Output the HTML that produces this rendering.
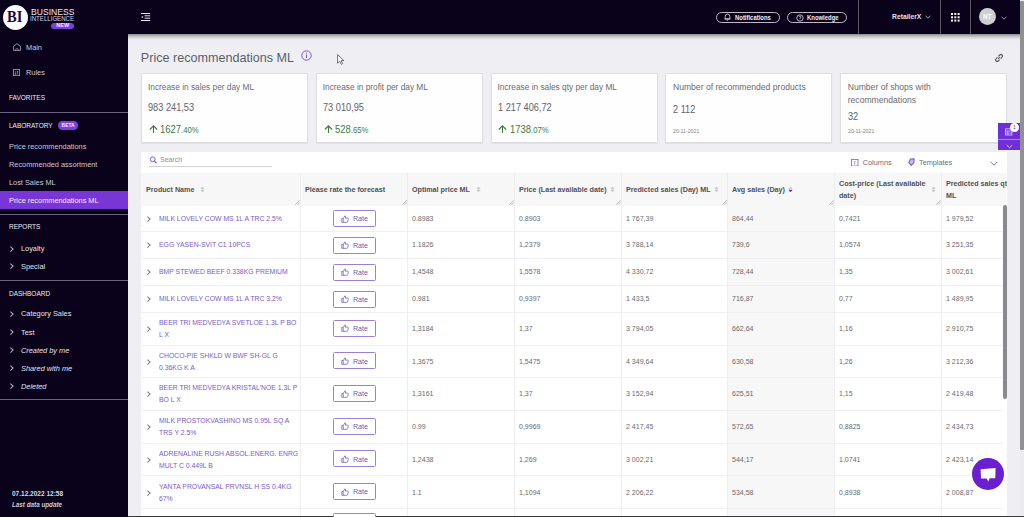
<!DOCTYPE html><html><head><meta charset="utf-8"><style>
*{margin:0;padding:0;box-sizing:border-box}
html,body{width:1024px;height:517px;overflow:hidden;background:#efeff3;font-family:"Liberation Sans",sans-serif}
body{position:relative}
.a{position:absolute;white-space:nowrap}
.dk{position:absolute;background:#09021a}
.sb{position:absolute;white-space:nowrap;color:#cdc9d4;font-size:8px;line-height:10px;transform:scaleX(0.92);transform-origin:0 0}
.sh{position:absolute;white-space:nowrap;color:#f0ecf6;font-size:7.3px;line-height:10px;transform:scaleX(0.89);transform-origin:0 0}
.sdiv{position:absolute;left:0;width:128px;height:1.3px;background:#67627e}
.chev{position:absolute;width:3.6px;height:3.6px;border-right:1px solid #b8b4c2;border-top:1px solid #b8b4c2;transform:rotate(45deg)}
.chevd{position:absolute;width:3.6px;height:3.6px;border-right:0.9px solid #7c7c80;border-top:0.9px solid #7c7c80;transform:rotate(45deg)}
.card{position:absolute;top:73px;width:167px;height:70px;background:#fefefe;border:1px solid #dcdce1;border-radius:1.5px;box-shadow:0 0.6px 0.8px rgba(0,0,0,0.07)}
.ct{position:absolute;left:6px;top:7px;font-size:8.3px;color:#6b6b70;line-height:13px;white-space:nowrap}
.cv{position:absolute;left:6px;font-size:10.4px;color:#636368;line-height:12px;white-space:nowrap;transform:scaleX(0.885);transform-origin:0 0}
.cd{position:absolute;left:6px;top:53.7px;font-size:6px;color:#86868a;line-height:6px;transform:scaleX(0.87);transform-origin:0 0}
.cg{position:absolute;left:18.3px;top:49px;font-size:10.5px;color:#3f7b3f;line-height:12px;white-space:nowrap;transform:scaleX(0.9);transform-origin:0 0}
.cg small{font-size:8.6px}
.arr{position:absolute;left:6.8px;top:50.5px}
.th{position:absolute;top:172px;height:34px;background:#f7f7f7;border-top:1px solid #fcfcfc}
.tht{position:absolute;left:4px;font-size:7.6px;font-weight:bold;color:#505055;line-height:11px;white-space:nowrap;transform:scaleX(0.94);transform-origin:0 0}
.vl{position:absolute;width:1px;background:#eeeef0}
.hl{position:absolute;left:141px;width:862px;height:1px;background:#f0f0f2}
.pn{position:absolute;left:159px;font-size:7.7px;color:#7a5cc4;line-height:12px;white-space:nowrap;transform:scaleX(0.89);transform-origin:0 0}
.num{position:absolute;font-size:7.8px;color:#6a6a6e;line-height:10px;white-space:nowrap;transform:scaleX(0.9);transform-origin:0 0}
.rate{position:absolute;left:333px;width:43px;height:17px;border:1px solid #9a7fdc;border-radius:1.5px;background:#fff}
.rate span{position:absolute;left:19px;top:3.3px;font-size:7.8px;line-height:10px;color:#6c5cb0;transform:scaleX(0.91);transform-origin:0 0}
.rz{position:absolute;width:5px;height:5px}
</style></head><body>
<div class="dk" style="left:0;top:0;width:128px;height:517px"></div>
<div class="dk" style="left:128px;top:0;width:892px;height:34px"></div>
<div class="a" style="left:128px;top:34px;width:892px;height:7px;background:linear-gradient(#8e8e92 0%,#b4b4b8 25%,#d2d2d8 50%,#e8e8ee 75%,#efeff3 100%)"></div>
<div class="a" style="left:1020px;top:0;width:4px;height:517px;background:#ececee"></div>
<div class="a" style="left:1020px;top:1.2px;width:4px;height:448.5px;background:#909092;border-radius:1px"></div>
<div class="a" style="left:128px;top:516px;width:896px;height:1px;background:#3a3a3e"></div>
<div class="a" style="left:2.6px;top:4.8px;width:25px;height:25.2px;border-radius:50%;background:#fbfafd"></div>
<div class="a" style="left:7.3px;top:7.85px;font-family:'Liberation Serif',serif;font-weight:bold;font-size:17.5px;line-height:17.5px;color:#1a0a36;transform:scaleX(0.83);transform-origin:0 0">BI</div>
<div class="a" style="left:30.5px;top:7.8px;font-size:9.8px;line-height:8px;color:#ebe6f4;transform:scaleX(0.876);transform-origin:0 0">BUSINESS</div>
<div class="a" style="left:30.2px;top:16px;font-size:7.1px;line-height:6px;color:#d8d3e0;transform:scaleX(0.86);transform-origin:0 0">INTELLIGENCE</div>
<div class="a" style="left:51.2px;top:22.7px;width:23px;height:6.2px;border-radius:3.1px;background:#7a3fde"></div>
<div class="a" style="left:56.3px;top:22.33px;font-size:5.5px;line-height:7px;color:#f2ecff;font-weight:bold">NEW</div>
<svg class="a" style="left:12.6px;top:43px" width="8" height="8" viewBox="0 0 8 8"><path d="M0.6 3.4L4 0.6L7.4 3.4V7.4H0.6Z" fill="none" stroke="#aaa5b8" stroke-width="0.85" stroke-linejoin="round"/><path d="M2.4 7.3C2.4 5.2 5.6 5.2 5.6 7.3" fill="none" stroke="#aaa5b8" stroke-width="0.8"/></svg>
<div class="sb" style="left:25.5px;top:42.5px">Main</div>
<svg class="a" style="left:13px;top:69px" width="7.2" height="7.2" viewBox="0 0 7.2 7.2"><rect x="0.5" y="0.6" width="6.2" height="6.1" fill="none" stroke="#aaa5b8" stroke-width="0.85"/><path d="M2.6 2.2V5.6M4.6 2.2V5.6M1.9 4.6L2.6 5.6L3.3 4.6M3.9 3.2L4.6 2.2L5.3 3.2" fill="none" stroke="#aaa5b8" stroke-width="0.6"/></svg>
<div class="sb" style="left:25.5px;top:68.3px">Rules</div>
<div class="sh" style="left:8.7px;top:92.7px">FAVORITES</div>
<div class="sdiv" style="top:112px"></div>
<div class="sh" style="left:8.7px;top:121.4px">LABORATORY</div>
<div class="a" style="left:58px;top:121.2px;width:20.2px;height:8.8px;border-radius:4.4px;background:#7a3fde"></div>
<div class="a" style="left:58px;top:122px;width:20.2px;text-align:center;font-size:4.9px;line-height:8.8px;color:#f2ecff;font-weight:bold">BETA</div>
<div class="sb" style="left:8.7px;top:142.2px">Price recommendations</div>
<div class="sb" style="left:8.7px;top:160.2px">Recommended assortment</div>
<div class="sb" style="left:8.7px;top:178px">Lost Sales ML</div>
<div class="a" style="left:0;top:191px;width:128px;height:18.3px;background:#7a35d6"></div>
<div class="sb" style="left:8.7px;top:196.2px;color:#f4f0fa">Price recommendations ML</div>
<div class="sdiv" style="top:214px"></div>
<div class="sh" style="left:8.7px;top:222.4px">REPORTS</div>
<div class="chev" style="left:8.6px;top:246.6px"></div>
<div class="sb" style="left:21.3px;top:244.0px;color:#e6e2ee">Loyalty</div>
<div class="chev" style="left:8.6px;top:264.4px"></div>
<div class="sb" style="left:21.3px;top:261.8px;color:#e6e2ee">Special</div>
<div class="sdiv" style="top:279.5px"></div>
<div class="sh" style="left:8.7px;top:289px">DASHBOARD</div>
<div class="chev" style="left:8.6px;top:311.8px"></div>
<div class="sb" style="left:21.3px;top:309.20000000000005px;color:#e6e2ee;">Category Sales</div>
<div class="chev" style="left:8.6px;top:330.2px"></div>
<div class="sb" style="left:21.3px;top:327.6px;color:#e6e2ee;">Test</div>
<div class="chev" style="left:8.6px;top:348.2px"></div>
<div class="sb" style="left:21.3px;top:345.6px;color:#e6e2ee;font-style:italic;">Created by me</div>
<div class="chev" style="left:8.6px;top:366.2px"></div>
<div class="sb" style="left:21.3px;top:363.6px;color:#e6e2ee;font-style:italic;">Shared with me</div>
<div class="chev" style="left:8.6px;top:384.4px"></div>
<div class="sb" style="left:21.3px;top:381.8px;color:#e6e2ee;font-style:italic;">Deleted</div>
<div class="sdiv" style="top:399px"></div>
<div class="a" style="left:11.7px;top:488.5px;font-size:7px;line-height:10px;font-weight:bold;color:#dcd8e4;transform:scaleX(0.93);transform-origin:0 0">07.12.2022 12:58</div>
<div class="a" style="left:11.7px;top:499.5px;font-size:7px;line-height:10px;font-weight:bold;font-style:italic;color:#cfcbd8;transform:scaleX(0.9);transform-origin:0 0">Last data update</div>
<svg class="a" style="left:141px;top:13px" width="10" height="9" viewBox="0 0 10 9"><path d="M0 0.5H9.2M3.6 2.8H9.2M3.6 5.2H9.2M0 7.5H9.2" stroke="#e8e4f0" stroke-width="1"/><circle cx="1.4" cy="4" r="0.85" fill="#f0ecf8"/></svg>
<div class="a" style="left:715.5px;top:11.5px;width:64px;height:11.5px;border:1px solid #bdb8c8;border-radius:6px"></div>
<svg class="a" style="left:724px;top:13px" width="7" height="8" viewBox="0 0 7 8"><path d="M1.2 6V3.4A2.3 2.3 0 0 1 5.8 3.4V6H1.2ZM0.5 6H6.5M2.8 7.2H4.2" fill="none" stroke="#e0dce8" stroke-width="0.8"/></svg>
<div class="a" style="left:734.8px;top:13px;font-size:7px;line-height:10px;font-weight:bold;color:#f0ecf8;transform:scaleX(0.845);transform-origin:0 0">Notifications</div>
<div class="a" style="left:787.3px;top:11.5px;width:60px;height:11.5px;border:1px solid #bdb8c8;border-radius:6px"></div>
<svg class="a" style="left:795.5px;top:13.5px" width="8" height="8" viewBox="0 0 8 8"><circle cx="4" cy="4" r="3.2" fill="none" stroke="#e0dce8" stroke-width="0.8"/><path d="M3 3.1A1 1 0 1 1 4 4.1V4.9" fill="none" stroke="#e0dce8" stroke-width="0.7"/><circle cx="4" cy="5.9" r="0.4" fill="#e0dce8"/></svg>
<div class="a" style="left:806.6px;top:13px;font-size:7px;line-height:10px;font-weight:bold;color:#f0ecf8;transform:scaleX(0.845);transform-origin:0 0">Knowledge</div>
<div class="a" style="left:857.5px;top:0;width:1px;height:34px;background:#5c5866"></div>
<div class="a" style="left:939.5px;top:0;width:1px;height:34px;background:#5c5866"></div>
<div class="a" style="left:970.3px;top:0;width:1px;height:34px;background:#5c5866"></div>
<div class="a" style="left:891.8px;top:12px;font-size:7.6px;line-height:10px;font-weight:bold;color:#e4e0ec;transform:scaleX(0.89);transform-origin:0 0">RetailerX</div>
<svg class="a" style="left:925px;top:15px" width="6" height="4" viewBox="0 0 6 4"><path d="M0.5 0.7L3 3.2L5.5 0.7" fill="none" stroke="#c8c4d2" stroke-width="0.8"/></svg>
<svg class="a" style="left:951px;top:12.8px" width="9" height="9" viewBox="0 0 9 9"><rect x="0.0" y="0.0" width="2" height="2" fill="#f4f2f8"/><rect x="3.3" y="0.0" width="2" height="2" fill="#f4f2f8"/><rect x="6.6" y="0.0" width="2" height="2" fill="#f4f2f8"/><rect x="0.0" y="3.3" width="2" height="2" fill="#f4f2f8"/><rect x="3.3" y="3.3" width="2" height="2" fill="#f4f2f8"/><rect x="6.6" y="3.3" width="2" height="2" fill="#f4f2f8"/><rect x="0.0" y="6.6" width="2" height="2" fill="#f4f2f8"/><rect x="3.3" y="6.6" width="2" height="2" fill="#f4f2f8"/><rect x="6.6" y="6.6" width="2" height="2" fill="#f4f2f8"/></svg>
<div class="a" style="left:979px;top:8.3px;width:17.2px;height:17.2px;border-radius:50%;background:#cfcfd2"></div>
<div class="a" style="left:983.2px;top:12.2px;font-size:6.8px;font-weight:bold;line-height:10px;color:#fafafa;transform:scaleX(0.93);transform-origin:0 0">NT</div>
<svg class="a" style="left:1000.8px;top:15.5px" width="6" height="4" viewBox="0 0 6 4"><path d="M0.5 0.7L3 3.2L5.5 0.7" fill="none" stroke="#c8c4d2" stroke-width="0.8"/></svg>
<div class="a" style="left:140.8px;top:50px;font-size:12.6px;line-height:16px;color:#5e5e65">Price recommendations ML</div>
<svg class="a" style="left:301px;top:50.1px" width="11" height="11" viewBox="0 0 11 11"><circle cx="5.5" cy="5.5" r="4.7" fill="none" stroke="#7a55cc" stroke-width="1"/><path d="M5.5 4.6V8" stroke="#7a55cc" stroke-width="1"/><circle cx="5.5" cy="3.2" r="0.6" fill="#7a55cc"/></svg>
<svg class="a" style="left:337px;top:54px" width="8" height="11" viewBox="0 0 8 11"><path d="M0.6 0.6V9.2L2.7 7.2L4.3 10.3L5.6 9.6L4.1 6.6H6.9Z" fill="#fff" stroke="#444" stroke-width="0.75" stroke-linejoin="round"/></svg>
<svg class="a" style="left:993.8px;top:52.6px" width="10" height="10" viewBox="0 0 10 10"><path d="M4.2 5.8L5.8 4.2M3.4 4.4L2 5.8A1.5 1.5 0 0 0 4.2 8L5.6 6.6M4.4 3.4L5.8 2A1.5 1.5 0 0 1 8 4.2L6.6 5.6" fill="none" stroke="#58585e" stroke-width="1.15"/></svg>
<div class="card" style="left:141px;width:167px">
<div class="ct" style="">Increase in sales per day ML</div>
<div class="cv" style="top:27.7px">983 241,53</div>
<svg class="arr" width="9" height="8.5" viewBox="0 0 9 8.5"><path d="M4.5 8.3V1.2M0.9 4.5L4.5 0.9L8.1 4.5" fill="none" stroke="#3f7b3f" stroke-width="1.1"/></svg>
<div class="cg">1627<small>.40%</small></div>
</div>
<div class="card" style="left:315.75px;width:167px">
<div class="ct" style="">Increase in profit per day ML</div>
<div class="cv" style="top:27.7px">73 010,95</div>
<svg class="arr" width="9" height="8.5" viewBox="0 0 9 8.5"><path d="M4.5 8.3V1.2M0.9 4.5L4.5 0.9L8.1 4.5" fill="none" stroke="#3f7b3f" stroke-width="1.1"/></svg>
<div class="cg">528<small>.65%</small></div>
</div>
<div class="card" style="left:490.5px;width:167px">
<div class="ct" style="">Increase in sales qty per day ML</div>
<div class="cv" style="top:27.7px">1 217 406,72</div>
<svg class="arr" width="9" height="8.5" viewBox="0 0 9 8.5"><path d="M4.5 8.3V1.2M0.9 4.5L4.5 0.9L8.1 4.5" fill="none" stroke="#3f7b3f" stroke-width="1.1"/></svg>
<div class="cg">1738<small>.07%</small></div>
</div>
<div class="card" style="left:665.25px;width:167px">
<div class="ct" style="font-size:8.6px;top:7px;left:6.7px;line-height:13.3px">Number of recommended products</div>
<div class="cv" style="top:29.7px;left:6.7px">2 112</div>
<div class="cd" style="left:6.7px">20-11-2021</div>
</div>
<div class="card" style="left:840px;width:167px">
<div class="ct" style="font-size:8.6px;top:7px;left:6.7px;line-height:13.3px">Number of shops with<br>recommendations</div>
<div class="cv" style="top:37px;left:6.7px">32</div>
<div class="cd" style="left:6.7px">20-11-2021</div>
</div>
<div class="a" style="left:998.1px;top:122.5px;width:21.5px;height:27.5px;background:#6f2fd8"></div>
<div class="a" style="left:998.1px;top:139.3px;width:21.5px;height:1.2px;background:#a88aec"></div>
<svg class="a" style="left:1005.3px;top:127.5px" width="8" height="8" viewBox="0 0 8 8"><rect x="0.6" y="0.8" width="6.3" height="6.2" fill="none" stroke="#ddd2f6" stroke-width="0.8"/><path d="M0.6 2.9H6.9M0.6 5H6.9M2.8 2.9V7" stroke="#ddd2f6" stroke-width="0.7"/></svg>
<div class="a" style="left:1010.2px;top:123px;width:8.6px;height:8.6px;border-radius:50%;background:#fff"></div>
<div class="a" style="left:1010.2px;top:123.6px;width:8.6px;text-align:center;font-size:5px;line-height:7px;color:#6f2fd8">1</div>
<svg class="a" style="left:1005.5px;top:143.5px" width="7" height="5" viewBox="0 0 7 5"><path d="M0.7 1L3.5 3.8L6.3 1" fill="none" stroke="#ece6fa" stroke-width="0.8"/></svg>
<div class="a" style="left:141px;top:152px;width:866px;height:364px;background:#fff"></div>
<svg class="a" style="left:149px;top:156px" width="9" height="9" viewBox="0 0 9 9"><circle cx="3.7" cy="3.3" r="2.4" fill="none" stroke="#7c5ccc" stroke-width="1"/><path d="M5.4 5.1L7.6 7.4" stroke="#7c5ccc" stroke-width="1.1"/></svg>
<div class="a" style="left:160px;top:155.3px;font-size:7.8px;line-height:10px;color:#8e8e94;transform:scaleX(0.9);transform-origin:0 0">Search</div>
<div class="a" style="left:149.2px;top:166.2px;width:123px;height:1.2px;background:#d4d4d8"></div>
<svg class="a" style="left:851px;top:158.7px" width="7.5" height="7.5" viewBox="0 0 7.5 7.5"><rect x="0.5" y="0.5" width="6.5" height="6.5" fill="none" stroke="#8c6cd8" stroke-width="0.9"/><path d="M3.75 2V5.5" stroke="#8c6cd8" stroke-width="0.8"/></svg>
<div class="a" style="left:862.8px;top:157.7px;font-size:7.3px;line-height:10px;color:#6e6e74">Columns</div>
<svg class="a" style="left:907.5px;top:158.3px" width="7" height="8" viewBox="0 0 7 8"><path d="M3.2 7.3L0.8 4.6L2.4 1L6.2 0.7L5.8 4.8Z" fill="#c9b8ef" stroke="#7c5ccc" stroke-width="1.1" stroke-linejoin="round"/></svg>
<div class="a" style="left:919px;top:157.7px;font-size:7.3px;line-height:10px;color:#6e6e74">Templates</div>
<svg class="a" style="left:990px;top:161px" width="8" height="5" viewBox="0 0 8 5"><path d="M0.6 0.8L4 4.2L7.4 0.8" fill="none" stroke="#7a55cc" stroke-width="0.9"/></svg>
<div class="th" style="left:141px;width:159px"></div>
<div class="th" style="left:300px;width:107px"></div>
<div class="th" style="left:407px;width:107px"></div>
<div class="th" style="left:514px;width:107px"></div>
<div class="th" style="left:621px;width:106px"></div>
<div class="th" style="left:727px;width:107px"></div>
<div class="th" style="left:834px;width:107px"></div>
<div class="th" style="left:941px;width:65px"></div>
<div class="tht" style="left:146px;top:184.3px">Product Name</div>
<div class="tht" style="left:305px;top:184.3px">Please rate the forecast</div>
<div class="tht" style="left:412px;top:184.3px">Optimal price ML</div>
<div class="tht" style="left:519px;top:184.3px">Price (Last available date)</div>
<div class="tht" style="left:626px;top:184.3px">Predicted sales (Day) ML</div>
<div class="tht" style="left:732px;top:184.3px">Avg sales (Day)</div>
<div class="tht" style="left:838.5px;top:177.8px;line-height:12px;">Cost-price (Last available<br>date)</div>
<div class="tht" style="left:945.5px;top:177.8px;line-height:12px;width:65px;overflow:hidden">Predicted sales qty<br>ML</div>
<div class="a" style="left:727px;top:206px;width:107px;height:310px;background:#f6f7f6"></div>
<div class="vl" style="left:300px;top:173px;height:343px"></div>
<div class="vl" style="left:407px;top:173px;height:343px"></div>
<div class="vl" style="left:514px;top:173px;height:343px"></div>
<div class="vl" style="left:621px;top:173px;height:343px"></div>
<div class="vl" style="left:727px;top:173px;height:343px"></div>
<div class="vl" style="left:834px;top:173px;height:343px"></div>
<div class="vl" style="left:941px;top:173px;height:343px"></div>
<div class="hl" style="top:231px"></div>
<div class="hl" style="top:258px"></div>
<div class="hl" style="top:285px"></div>
<div class="hl" style="top:312px"></div>
<div class="hl" style="top:344.5px"></div>
<div class="hl" style="top:377.3px"></div>
<div class="hl" style="top:410px"></div>
<div class="hl" style="top:442.7px"></div>
<div class="hl" style="top:475.4px"></div>
<div class="hl" style="top:508.2px"></div>
<svg class="a" style="left:199.5px;top:186px" width="5" height="7" viewBox="0 0 5 7"><path d="M0.9 2.7L2.5 0.9L4.1 2.7Z" fill="#c4c4c8" stroke="#c4c4c8" stroke-width="0.5"/><path d="M0.9 4.1L2.5 6L4.1 4.1Z" fill="#c4c4c8" stroke="#c4c4c8" stroke-width="0.5"/></svg>
<svg class="a" style="left:475.5px;top:186px" width="5" height="7" viewBox="0 0 5 7"><path d="M0.9 2.7L2.5 0.9L4.1 2.7Z" fill="#c4c4c8" stroke="#c4c4c8" stroke-width="0.5"/><path d="M0.9 4.1L2.5 6L4.1 4.1Z" fill="#c4c4c8" stroke="#c4c4c8" stroke-width="0.5"/></svg>
<svg class="a" style="left:609.5px;top:186px" width="5" height="7" viewBox="0 0 5 7"><path d="M0.9 2.7L2.5 0.9L4.1 2.7Z" fill="#c4c4c8" stroke="#c4c4c8" stroke-width="0.5"/><path d="M0.9 4.1L2.5 6L4.1 4.1Z" fill="#c4c4c8" stroke="#c4c4c8" stroke-width="0.5"/></svg>
<svg class="a" style="left:713.5px;top:186px" width="5" height="7" viewBox="0 0 5 7"><path d="M0.9 2.7L2.5 0.9L4.1 2.7Z" fill="#c4c4c8" stroke="#c4c4c8" stroke-width="0.5"/><path d="M0.9 4.1L2.5 6L4.1 4.1Z" fill="#c4c4c8" stroke="#c4c4c8" stroke-width="0.5"/></svg>
<svg class="a" style="left:788.3px;top:186px" width="5" height="7" viewBox="0 0 5 7"><path d="M0.9 2.7L2.5 0.9L4.1 2.7Z" fill="#c4c4c8" stroke="#c4c4c8" stroke-width="0.5"/><path d="M0.9 4.1L2.5 6L4.1 4.1Z" fill="#5a24c8" stroke="#5a24c8" stroke-width="0.5"/></svg>
<svg class="a" style="left:931.0px;top:186px" width="5" height="7" viewBox="0 0 5 7"><path d="M0.9 2.7L2.5 0.9L4.1 2.7Z" fill="#c4c4c8" stroke="#c4c4c8" stroke-width="0.5"/><path d="M0.9 4.1L2.5 6L4.1 4.1Z" fill="#c4c4c8" stroke="#c4c4c8" stroke-width="0.5"/></svg>
<svg class="a" style="left:295px;top:200px" width="5" height="5" viewBox="0 0 5 5"><path d="M0.3 4.7L4.7 0.3M2.6 4.7L4.7 2.6" stroke="#8e8e94" stroke-width="0.6"/></svg>
<svg class="a" style="left:402px;top:200px" width="5" height="5" viewBox="0 0 5 5"><path d="M0.3 4.7L4.7 0.3M2.6 4.7L4.7 2.6" stroke="#8e8e94" stroke-width="0.6"/></svg>
<svg class="a" style="left:509px;top:200px" width="5" height="5" viewBox="0 0 5 5"><path d="M0.3 4.7L4.7 0.3M2.6 4.7L4.7 2.6" stroke="#8e8e94" stroke-width="0.6"/></svg>
<svg class="a" style="left:616px;top:200px" width="5" height="5" viewBox="0 0 5 5"><path d="M0.3 4.7L4.7 0.3M2.6 4.7L4.7 2.6" stroke="#8e8e94" stroke-width="0.6"/></svg>
<svg class="a" style="left:722px;top:200px" width="5" height="5" viewBox="0 0 5 5"><path d="M0.3 4.7L4.7 0.3M2.6 4.7L4.7 2.6" stroke="#8e8e94" stroke-width="0.6"/></svg>
<svg class="a" style="left:829px;top:200px" width="5" height="5" viewBox="0 0 5 5"><path d="M0.3 4.7L4.7 0.3M2.6 4.7L4.7 2.6" stroke="#8e8e94" stroke-width="0.6"/></svg>
<svg class="a" style="left:936px;top:200px" width="5" height="5" viewBox="0 0 5 5"><path d="M0.3 4.7L4.7 0.3M2.6 4.7L4.7 2.6" stroke="#8e8e94" stroke-width="0.6"/></svg>
<div class="chevd" style="left:146px;top:216.8px"></div>
<div class="pn" style="top:212.8px">MILK LOVELY COW MS 1L A TRC 2.5%</div>
<div class="rate" style="top:210.0px"><svg style="position:absolute;left:7px;top:3.5px" width="8" height="8" viewBox="0 0 8 8"><path d="M0.8 3.5H2.2V7.3H0.8ZM2.2 3.6L3.8 0.9C4.5 0.9 4.7 1.4 4.6 2L4.3 3.1H6.6C7.2 3.1 7.4 3.6 7.3 4.1L6.6 6.7C6.5 7.1 6.2 7.3 5.8 7.3H2.2" fill="none" stroke="#7055c0" stroke-width="0.75"/></svg><span>Rate</span></div>
<div class="num" style="left:412px;top:213.8px">0.8983</div>
<div class="num" style="left:519px;top:213.8px">0.8903</div>
<div class="num" style="left:626px;top:213.8px">1 767,39</div>
<div class="num" style="left:732px;top:213.8px">864,44</div>
<div class="num" style="left:839px;top:213.8px">0,7421</div>
<div class="num" style="left:946px;top:213.8px">1 979,52</div>
<div class="chevd" style="left:146px;top:243.3px"></div>
<div class="pn" style="top:239.3px">EGG YASEN-SVIT C1 10PCS</div>
<div class="rate" style="top:236.5px"><svg style="position:absolute;left:7px;top:3.5px" width="8" height="8" viewBox="0 0 8 8"><path d="M0.8 3.5H2.2V7.3H0.8ZM2.2 3.6L3.8 0.9C4.5 0.9 4.7 1.4 4.6 2L4.3 3.1H6.6C7.2 3.1 7.4 3.6 7.3 4.1L6.6 6.7C6.5 7.1 6.2 7.3 5.8 7.3H2.2" fill="none" stroke="#7055c0" stroke-width="0.75"/></svg><span>Rate</span></div>
<div class="num" style="left:412px;top:240.3px">1.1826</div>
<div class="num" style="left:519px;top:240.3px">1,2379</div>
<div class="num" style="left:626px;top:240.3px">3 788,14</div>
<div class="num" style="left:732px;top:240.3px">739,6</div>
<div class="num" style="left:839px;top:240.3px">1,0574</div>
<div class="num" style="left:946px;top:240.3px">3 251,35</div>
<div class="chevd" style="left:146px;top:270.3px"></div>
<div class="pn" style="top:266.3px">BMP STEWED BEEF 0.338KG PREMIUM</div>
<div class="rate" style="top:263.5px"><svg style="position:absolute;left:7px;top:3.5px" width="8" height="8" viewBox="0 0 8 8"><path d="M0.8 3.5H2.2V7.3H0.8ZM2.2 3.6L3.8 0.9C4.5 0.9 4.7 1.4 4.6 2L4.3 3.1H6.6C7.2 3.1 7.4 3.6 7.3 4.1L6.6 6.7C6.5 7.1 6.2 7.3 5.8 7.3H2.2" fill="none" stroke="#7055c0" stroke-width="0.75"/></svg><span>Rate</span></div>
<div class="num" style="left:412px;top:267.3px">1,4548</div>
<div class="num" style="left:519px;top:267.3px">1,5578</div>
<div class="num" style="left:626px;top:267.3px">4 330,72</div>
<div class="num" style="left:732px;top:267.3px">728,44</div>
<div class="num" style="left:839px;top:267.3px">1,35</div>
<div class="num" style="left:946px;top:267.3px">3 002,61</div>
<div class="chevd" style="left:146px;top:297.3px"></div>
<div class="pn" style="top:293.3px">MILK LOVELY COW MS 1L A TRC 3.2%</div>
<div class="rate" style="top:290.5px"><svg style="position:absolute;left:7px;top:3.5px" width="8" height="8" viewBox="0 0 8 8"><path d="M0.8 3.5H2.2V7.3H0.8ZM2.2 3.6L3.8 0.9C4.5 0.9 4.7 1.4 4.6 2L4.3 3.1H6.6C7.2 3.1 7.4 3.6 7.3 4.1L6.6 6.7C6.5 7.1 6.2 7.3 5.8 7.3H2.2" fill="none" stroke="#7055c0" stroke-width="0.75"/></svg><span>Rate</span></div>
<div class="num" style="left:412px;top:294.3px">0.981</div>
<div class="num" style="left:519px;top:294.3px">0,9397</div>
<div class="num" style="left:626px;top:294.3px">1 433,5</div>
<div class="num" style="left:732px;top:294.3px">716,87</div>
<div class="num" style="left:839px;top:294.3px">0,77</div>
<div class="num" style="left:946px;top:294.3px">1 489,95</div>
<div class="chevd" style="left:146px;top:327.05px"></div>
<div class="pn" style="top:317.05px;line-height:11.9px">BEER TRI MEDVEDYA SVETLOE 1.3L P BO<br>L X</div>
<div class="rate" style="top:319.65px"><svg style="position:absolute;left:7px;top:3.5px" width="8" height="8" viewBox="0 0 8 8"><path d="M0.8 3.5H2.2V7.3H0.8ZM2.2 3.6L3.8 0.9C4.5 0.9 4.7 1.4 4.6 2L4.3 3.1H6.6C7.2 3.1 7.4 3.6 7.3 4.1L6.6 6.7C6.5 7.1 6.2 7.3 5.8 7.3H2.2" fill="none" stroke="#7055c0" stroke-width="0.75"/></svg><span>Rate</span></div>
<div class="num" style="left:412px;top:324.05px">1,3184</div>
<div class="num" style="left:519px;top:324.05px">1,37</div>
<div class="num" style="left:626px;top:324.05px">3 794,05</div>
<div class="num" style="left:732px;top:324.05px">662,64</div>
<div class="num" style="left:839px;top:324.05px">1,16</div>
<div class="num" style="left:946px;top:324.05px">2 910,75</div>
<div class="chevd" style="left:146px;top:359.7px"></div>
<div class="pn" style="top:349.7px;line-height:11.9px">CHOCO-PIE SHKLD W BWF SH-GL G<br>0.36KG K A</div>
<div class="rate" style="top:352.29999999999995px"><svg style="position:absolute;left:7px;top:3.5px" width="8" height="8" viewBox="0 0 8 8"><path d="M0.8 3.5H2.2V7.3H0.8ZM2.2 3.6L3.8 0.9C4.5 0.9 4.7 1.4 4.6 2L4.3 3.1H6.6C7.2 3.1 7.4 3.6 7.3 4.1L6.6 6.7C6.5 7.1 6.2 7.3 5.8 7.3H2.2" fill="none" stroke="#7055c0" stroke-width="0.75"/></svg><span>Rate</span></div>
<div class="num" style="left:412px;top:356.7px">1,3675</div>
<div class="num" style="left:519px;top:356.7px">1,5475</div>
<div class="num" style="left:626px;top:356.7px">4 349,64</div>
<div class="num" style="left:732px;top:356.7px">630,58</div>
<div class="num" style="left:839px;top:356.7px">1,26</div>
<div class="num" style="left:946px;top:356.7px">3 212,36</div>
<div class="chevd" style="left:146px;top:392.45px"></div>
<div class="pn" style="top:382.45px;line-height:11.9px">BEER TRI MEDVEDYA KRISTAL'NOE 1.3L P<br>BO L X</div>
<div class="rate" style="top:385.04999999999995px"><svg style="position:absolute;left:7px;top:3.5px" width="8" height="8" viewBox="0 0 8 8"><path d="M0.8 3.5H2.2V7.3H0.8ZM2.2 3.6L3.8 0.9C4.5 0.9 4.7 1.4 4.6 2L4.3 3.1H6.6C7.2 3.1 7.4 3.6 7.3 4.1L6.6 6.7C6.5 7.1 6.2 7.3 5.8 7.3H2.2" fill="none" stroke="#7055c0" stroke-width="0.75"/></svg><span>Rate</span></div>
<div class="num" style="left:412px;top:389.45px">1,3161</div>
<div class="num" style="left:519px;top:389.45px">1,37</div>
<div class="num" style="left:626px;top:389.45px">3 152,94</div>
<div class="num" style="left:732px;top:389.45px">625,51</div>
<div class="num" style="left:839px;top:389.45px">1,15</div>
<div class="num" style="left:946px;top:389.45px">2 419,48</div>
<div class="chevd" style="left:146px;top:425.15000000000003px"></div>
<div class="pn" style="top:415.15000000000003px;line-height:11.9px">MILK PROSTOKVASHINO MS 0.95L SQ A<br>TRS Y 2.5%</div>
<div class="rate" style="top:417.75px"><svg style="position:absolute;left:7px;top:3.5px" width="8" height="8" viewBox="0 0 8 8"><path d="M0.8 3.5H2.2V7.3H0.8ZM2.2 3.6L3.8 0.9C4.5 0.9 4.7 1.4 4.6 2L4.3 3.1H6.6C7.2 3.1 7.4 3.6 7.3 4.1L6.6 6.7C6.5 7.1 6.2 7.3 5.8 7.3H2.2" fill="none" stroke="#7055c0" stroke-width="0.75"/></svg><span>Rate</span></div>
<div class="num" style="left:412px;top:422.15000000000003px">0.99</div>
<div class="num" style="left:519px;top:422.15000000000003px">0,9969</div>
<div class="num" style="left:626px;top:422.15000000000003px">2 417,45</div>
<div class="num" style="left:732px;top:422.15000000000003px">572,65</div>
<div class="num" style="left:839px;top:422.15000000000003px">0,8825</div>
<div class="num" style="left:946px;top:422.15000000000003px">2 434,73</div>
<div class="chevd" style="left:146px;top:457.84999999999997px"></div>
<div class="pn" style="top:447.84999999999997px;line-height:11.9px">ADRENALINE RUSH ABSOL.ENERG. ENRG<br>MULT C 0.449L B</div>
<div class="rate" style="top:450.44999999999993px"><svg style="position:absolute;left:7px;top:3.5px" width="8" height="8" viewBox="0 0 8 8"><path d="M0.8 3.5H2.2V7.3H0.8ZM2.2 3.6L3.8 0.9C4.5 0.9 4.7 1.4 4.6 2L4.3 3.1H6.6C7.2 3.1 7.4 3.6 7.3 4.1L6.6 6.7C6.5 7.1 6.2 7.3 5.8 7.3H2.2" fill="none" stroke="#7055c0" stroke-width="0.75"/></svg><span>Rate</span></div>
<div class="num" style="left:412px;top:454.84999999999997px">1,2438</div>
<div class="num" style="left:519px;top:454.84999999999997px">1,269</div>
<div class="num" style="left:626px;top:454.84999999999997px">3 002,21</div>
<div class="num" style="left:732px;top:454.84999999999997px">544,17</div>
<div class="num" style="left:839px;top:454.84999999999997px">1,0741</div>
<div class="num" style="left:946px;top:454.84999999999997px">2 423,14</div>
<div class="chevd" style="left:146px;top:490.59999999999997px"></div>
<div class="pn" style="top:480.59999999999997px;line-height:11.9px">YANTA PROVANSAL PRVNSL H SS 0.4KG<br>67%</div>
<div class="rate" style="top:483.19999999999993px"><svg style="position:absolute;left:7px;top:3.5px" width="8" height="8" viewBox="0 0 8 8"><path d="M0.8 3.5H2.2V7.3H0.8ZM2.2 3.6L3.8 0.9C4.5 0.9 4.7 1.4 4.6 2L4.3 3.1H6.6C7.2 3.1 7.4 3.6 7.3 4.1L6.6 6.7C6.5 7.1 6.2 7.3 5.8 7.3H2.2" fill="none" stroke="#7055c0" stroke-width="0.75"/></svg><span>Rate</span></div>
<div class="num" style="left:412px;top:487.59999999999997px">1.1</div>
<div class="num" style="left:519px;top:487.59999999999997px">1,1094</div>
<div class="num" style="left:626px;top:487.59999999999997px">2 206,22</div>
<div class="num" style="left:732px;top:487.59999999999997px">534,58</div>
<div class="num" style="left:839px;top:487.59999999999997px">0,8938</div>
<div class="num" style="left:946px;top:487.59999999999997px">2 008,87</div>
<div class="rate" style="top:513.3px;height:10px"></div>
<div class="a" style="left:1003px;top:205px;width:3.5px;height:194px;background:#8a8a8e;border-radius:2px"></div>
<div class="a" style="left:972.4px;top:458px;width:31.8px;height:31.8px;border-radius:50%;background:#6a1fd0"></div>
<svg class="a" style="left:979px;top:467.2px" width="19" height="16" viewBox="0 0 19 16"><path d="M1.6 2.3L16.6 1.1L16.3 11.3H10.8L9.3 14.5L7.6 11.6H2Z" fill="#fff"/></svg>
</body></html>
